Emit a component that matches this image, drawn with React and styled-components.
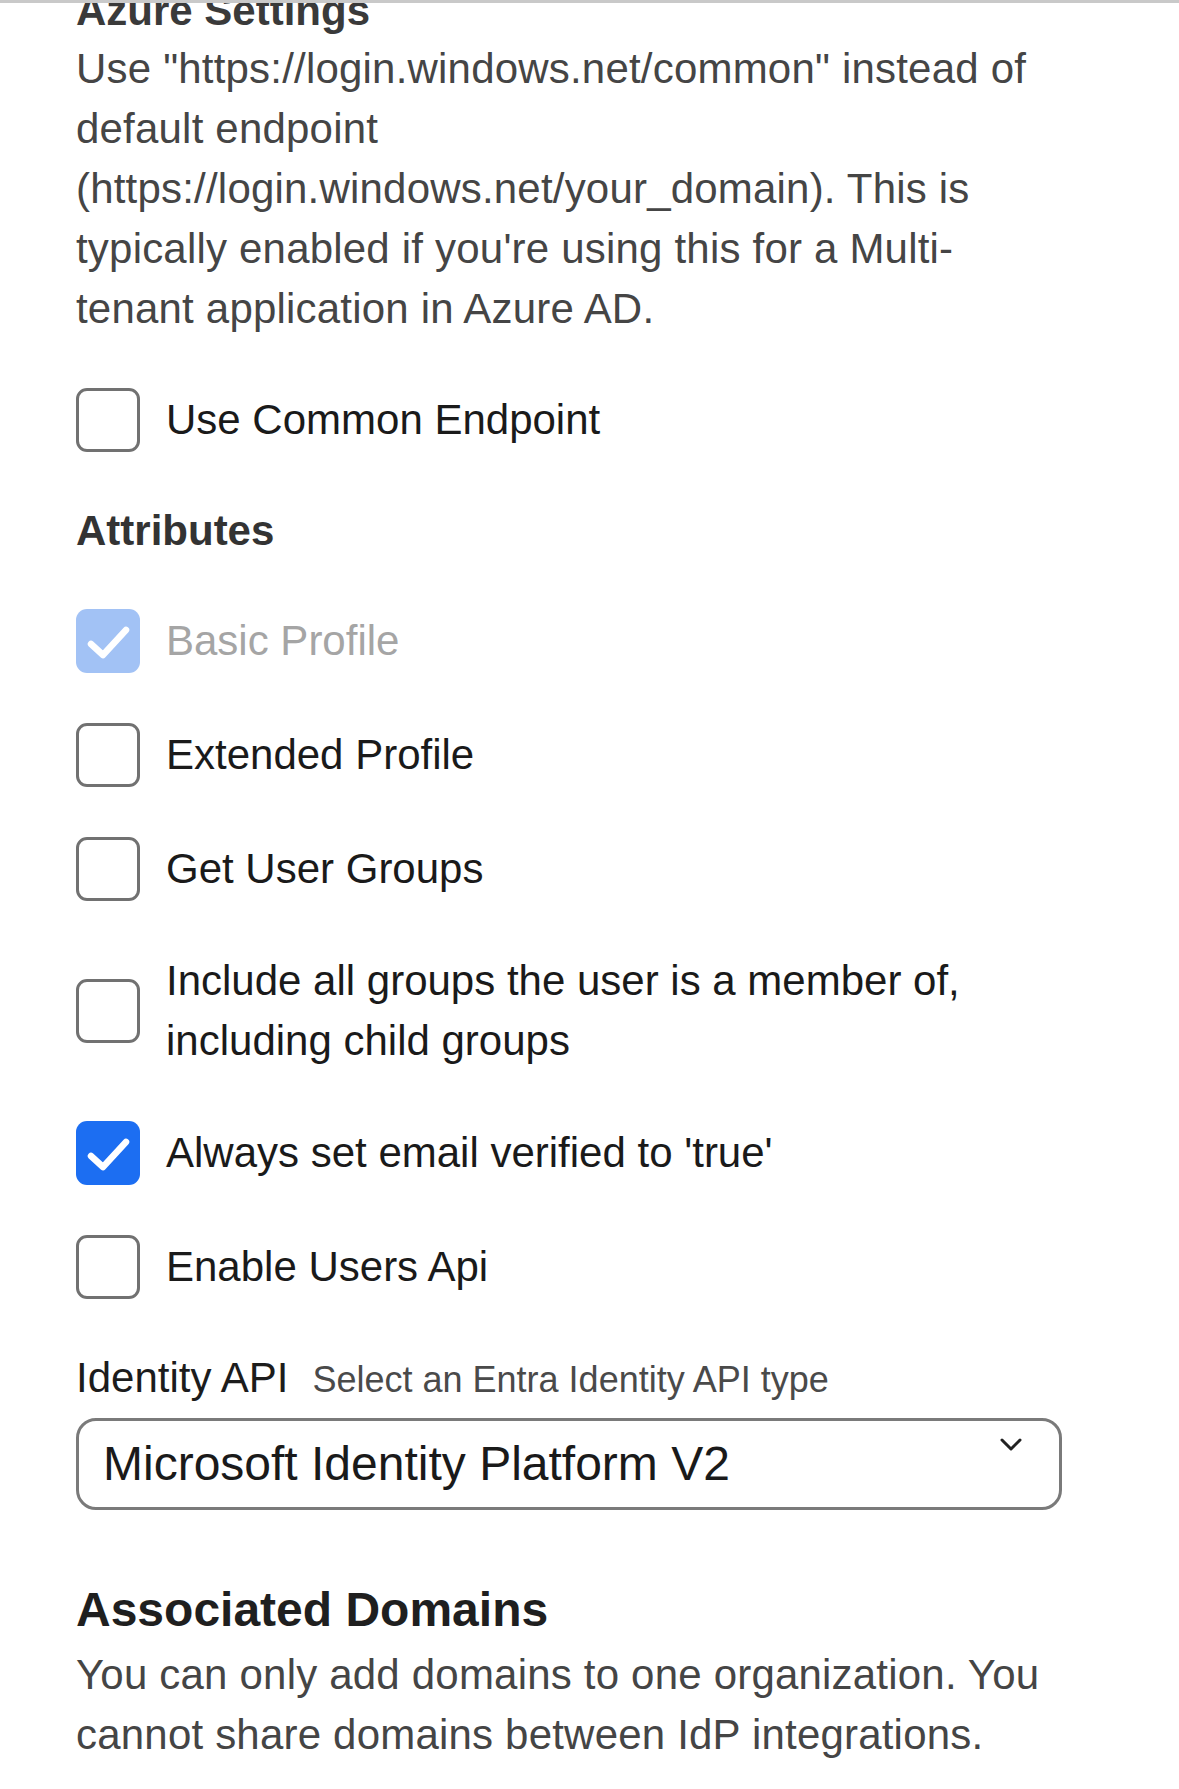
import React from 'react';
import styled, { createGlobalStyle } from 'styled-components';

const GlobalStyle = createGlobalStyle`
  html, body {
    margin: 0;
    padding: 0;
    background: #ffffff;
  }
  body {
    font-family: "Liberation Sans", Arial, Helvetica, sans-serif;
    -webkit-font-smoothing: antialiased;
  }
`

const Page = styled.main`
  position: relative;
  width: 1179px;
  height: 1789px;
  overflow: hidden;
  background: #ffffff;
  box-sizing: border-box;
  padding: 0 117px 0 76px;
`

const TopRule = styled.div`
  position: absolute;
  top: 0;
  left: 0;
  right: 0;
  height: 3px;
  background: #c9c9c9;
  z-index: 2;
`

const SectionTitle = styled.h2`
  margin: ${p => p.$top || 0}px 0 0;
  font-size: ${p => p.$size || 42}px;
  line-height: 60px;
  font-weight: 700;
  color: ${p => p.$color || '#3a3a3a'};
`

const Paragraph = styled.p`
  margin: ${p => p.$top || 0}px 0 0;
  font-size: 42px;
  line-height: 60px;
  color: #454545;
  letter-spacing: 0.2px;
`

const CheckList = styled.div`
  display: flex;
  flex-direction: column;
  gap: 50px;
  margin-top: ${p => p.$top || 0}px;
`

const CheckRow = styled.label`
  display: flex;
  align-items: center;
  gap: 26px;
  min-height: 64px;
`

const Box = styled.span`
  flex: 0 0 64px;
  width: 64px;
  height: 64px;
  box-sizing: border-box;
  border-radius: 11px;
  border: ${p => (p.$checked ? 'none' : '3px solid #717171')};
  background: ${p => (p.$checked ? (p.$disabled ? '#a2c2f5' : '#1c6ef2') : '#ffffff')};
  display: flex;
  align-items: center;
  justify-content: center;
`

const CheckLabel = styled.span`
  font-size: 42px;
  line-height: 60px;
  color: ${p => (p.$disabled ? '#a5a5a5' : '#1a1a1a')};
`

const FieldLabelRow = styled.div`
  display: flex;
  align-items: baseline;
  gap: 24px;
  margin-top: 49px;
  line-height: 60px;
`

const FieldLabel = styled.span`
  font-size: 42px;
  color: #1c1c1c;
`

const FieldHint = styled.span`
  font-size: 36px;
  color: #4a4a4a;
`

const Select = styled.div`
  display: flex;
  align-items: center;
  justify-content: space-between;
  height: 92px;
  width: 986px;
  box-sizing: border-box;
  margin-top: 8px;
  padding: 0 37px 0 24px;
  border: 3px solid #7a7a7a;
  border-radius: 20px;
`

const SelectValue = styled.span`
  font-size: 48px;
  line-height: 60px;
  color: #1a1a1a;
`

const Chevron = styled.svg`
  align-self: flex-start;
  margin-top: 17px;
  width: 22px;
  height: 13px;
`

function Checkbox({ checked, disabled, children }) {
  return (
    <CheckRow>
      <Box $checked={checked} $disabled={disabled}>
        {checked && (
          <svg width="64" height="64" viewBox="0 0 64 64">
            <path d="M15 35 L27 46 L50 21" fill="none" stroke="#ffffff" strokeWidth="6.5" strokeLinecap="round" strokeLinejoin="round" />
          </svg>
        )}
      </Box>
      <CheckLabel $disabled={disabled}>{children}</CheckLabel>
    </CheckRow>
  );
}

const attributes = [
  { label: 'Basic Profile', checked: true, disabled: true },
  { label: 'Extended Profile' },
  { label: 'Get User Groups' },
  { label: 'Include all groups the user is a member of, including child groups' },
  { label: "Always set email verified to 'true'", checked: true },
  { label: 'Enable Users Api' },
];

export default function App() {
  return (
    <>
      <GlobalStyle />
      <Page>
        <TopRule />
        <SectionTitle $top={-19}>Azure Settings</SectionTitle>
        <Paragraph $top={-2}>
          Use "https://login.windows.net/common" instead of default endpoint
          (https://login.windows.net/your_domain). This is typically enabled if you're using
          this for a Multi-tenant application in Azure AD.
        </Paragraph>

        <CheckList $top={49}>
          <Checkbox>Use Common Endpoint</Checkbox>
        </CheckList>

        <SectionTitle $top={49} $color="#333333">Attributes</SectionTitle>

        <CheckList $top={48}>
          {attributes.map(a => (
            <Checkbox key={a.label} checked={a.checked} disabled={a.disabled}>
              {a.label}
            </Checkbox>
          ))}
        </CheckList>

        <FieldLabelRow>
          <FieldLabel>Identity API</FieldLabel>
          <FieldHint>Select an Entra Identity API type</FieldHint>
        </FieldLabelRow>
        <Select>
          <SelectValue>Microsoft Identity Platform V2</SelectValue>
          <Chevron viewBox="0 0 22 13">
            <path d="M2 2 L11 11 L20 2" fill="none" stroke="#222222" strokeWidth="3" strokeLinecap="round" strokeLinejoin="round" />
          </Chevron>
        </Select>

        <SectionTitle $top={70} $size={48} $color="#1f1f1f">Associated Domains</SectionTitle>
        <Paragraph $top={5}>
          You can only add domains to one organization. You cannot share domains between IdP
          integrations.
        </Paragraph>
      </Page>
    </>
  );
}
